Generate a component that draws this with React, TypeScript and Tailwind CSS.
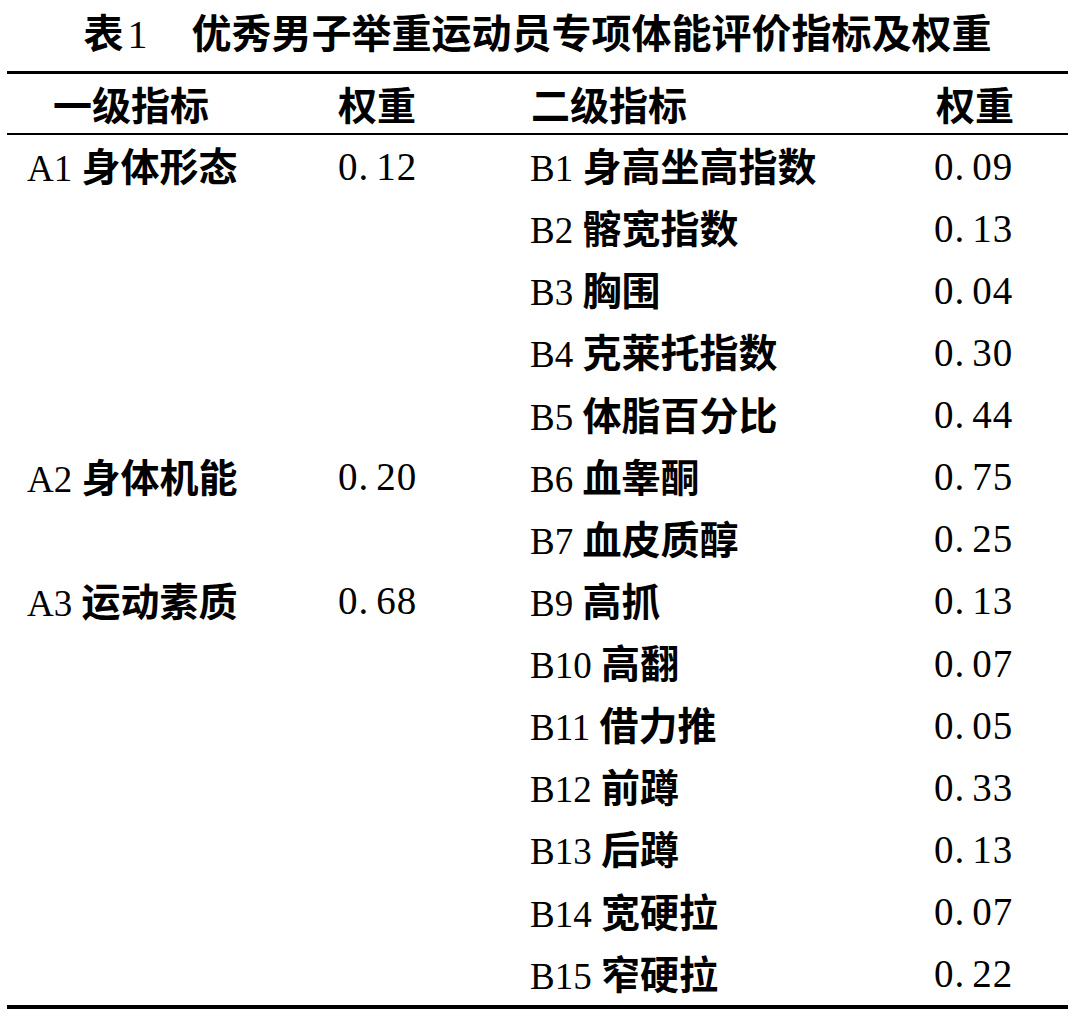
import React from "react";

type Row = { a?: [string, string]; w?: string; b: [string, string]; v: string };

const rows: Row[] = [
  { a: ["A1", "身体形态"], w: "0.12", b: ["B1", "身高坐高指数"], v: "0.09" },
  { b: ["B2", "髂宽指数"], v: "0.13" },
  { b: ["B3", "胸围"], v: "0.04" },
  { b: ["B4", "克莱托指数"], v: "0.30" },
  { b: ["B5", "体脂百分比"], v: "0.44" },
  { a: ["A2", "身体机能"], w: "0.20", b: ["B6", "血睾酮"], v: "0.75" },
  { b: ["B7", "血皮质醇"], v: "0.25" },
  { a: ["A3", "运动素质"], w: "0.68", b: ["B9", "高抓"], v: "0.13" },
  { b: ["B10", "高翻"], v: "0.07" },
  { b: ["B11", "借力推"], v: "0.05" },
  { b: ["B12", "前蹲"], v: "0.33" },
  { b: ["B13", "后蹲"], v: "0.13" },
  { b: ["B14", "宽硬拉"], v: "0.07" },
  { b: ["B15", "窄硬拉"], v: "0.22" },
];

function Label({ code, name }: { code: string; name: string }) {
  return (
    <span className="whitespace-nowrap">
      <span className="font-['Liberation_Serif',serif] text-[37px] font-normal">{code} </span>
      <span className="font-['Noto_Sans_CJK_SC',sans-serif] text-[39px] font-bold">{name}</span>
    </span>
  );
}

function Num({ v }: { v: string }) {
  const [i, d] = v.split(".");
  return (
    <span className="font-['Liberation_Serif',serif] text-[39px] tracking-[1px] whitespace-nowrap">
      {i}.<span className="ml-[7px]">{d}</span>
    </span>
  );
}

const cjk = "font-['Noto_Sans_CJK_SC',sans-serif] font-bold text-[39px]";

export default function App() {
  return (
    <div className="w-[1080px] h-[1017px] bg-white text-black overflow-hidden">
      <div className="ml-[7px] w-[1061px] flex flex-col">
        <div className="h-[71px] pb-[6px] flex items-center justify-center leading-none">
          <span className="font-['Noto_Sans_CJK_SC',sans-serif] font-bold text-[40px] whitespace-nowrap">
            表<span className="font-['Liberation_Serif',serif] font-normal ml-[4px]">1</span>
            <span className="inline-block w-[44px]" />
            优秀男子举重运动员专项体能评价指标及权重
          </span>
        </div>
        <div className="h-[3px] bg-black" />
        <div className="h-[59px] grid grid-cols-[331px_191px_405px_134px] items-center leading-none">
          <div className={`${cjk} pl-[46px]`}>一级指标</div>
          <div className={cjk}>权重</div>
          <div className={`${cjk} pl-[2px]`}>二级指标</div>
          <div className={`${cjk} pl-[2px]`}>权重</div>
        </div>
        <div className="h-[2px] bg-black" />
        <div className="flex flex-col">
          {rows.map((r, idx) => (
            <div
              key={idx}
              className="h-[62.14px] grid grid-cols-[331px_191px_405px_134px] items-center leading-none"
            >
              <div className="pl-[20px]">{r.a ? <Label code={r.a[0]} name={r.a[1]} /> : null}</div>
              <div>{r.w ? <Num v={r.w} /> : null}</div>
              <div className="pl-[1px]">
                <Label code={r.b[0]} name={r.b[1]} />
              </div>
              <div>
                <Num v={r.v} />
              </div>
            </div>
          ))}
        </div>
        <div className="h-[4px] bg-black" />
      </div>
    </div>
  );
}
